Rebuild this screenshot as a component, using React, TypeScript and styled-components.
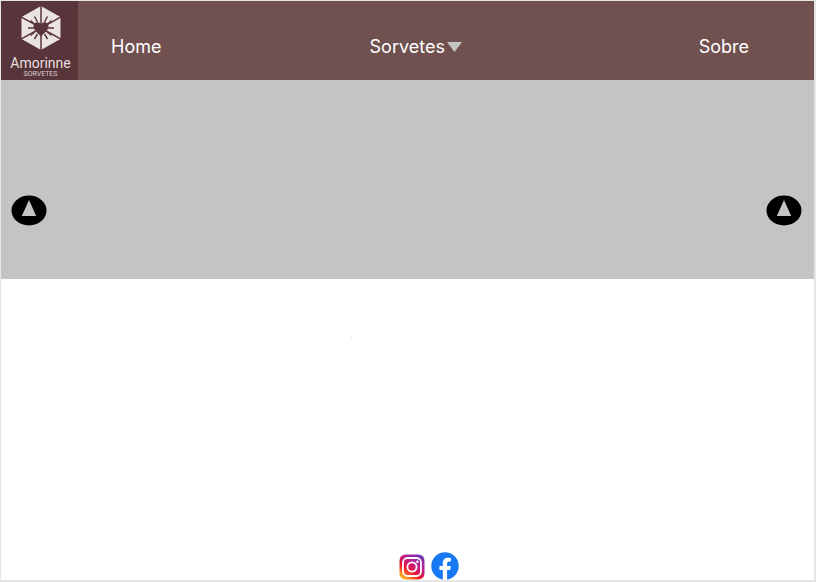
import React from "react";
import styled, { createGlobalStyle } from "styled-components";

const GlobalStyle = createGlobalStyle`
  *, *::before, *::after { box-sizing: border-box; }
  body {
    margin: 0;
    background: #e5e5e5;
    font-family: Inter, "Liberation Sans", sans-serif;
  }
`;

const Page = styled.div`
  display: flex;
  flex-direction: column;
  min-height: 100vh;
  border: solid #e5e5e5;
  border-width: 1px 2px 2px 1px;
  background: #ffffff;
`;

const Header = styled.header`
  display: flex;
  background: #70514f;
`;

const Brand = styled.a`
  display: flex;
  flex-direction: column;
  align-items: center;
  width: 77px;
  height: 79px;
  padding: 5px 0 0 2px;
  background: #58353a;
  color: #e9dfdf;
  text-decoration: none;
`;

const BrandName = styled.span`
  margin-top: 4px;
  font: 400 14px/16px Roboto, sans-serif;
`;

const BrandTag = styled.span`
  font: 400 7px/6px Roboto, sans-serif;
  color: #dccfd0;
`;

const Nav = styled.nav`
  flex: 1;
  display: grid;
  grid-template-columns: 11fr 14fr auto;
  align-items: center;
  padding: 12px 65px 0 33px;
`;

const NavLink = styled.a`
  justify-self: start;
  color: #ffffff;
  font-size: 18px;
  line-height: 24px;
  font-weight: 400;
  text-decoration: none;
`;

const NavButton = styled.button`
  justify-self: start;
  display: flex;
  align-items: center;
  gap: 2px;
  padding: 0;
  border: 0;
  background: none;
  color: #ffffff;
  font: 400 18px/24px Inter, "Liberation Sans", sans-serif;
`;

const Banner = styled.section`
  display: flex;
  align-items: center;
  justify-content: space-between;
  height: 199px;
  padding: 62px 12px 0 10px;
  background: #c4c4c4;
`;

const ArrowButton = styled.button`
  display: flex;
  padding: 0;
  border: 0;
  background: none;
`;

const Main = styled.main`
  flex: 1;
  padding: 58px 0 0 43%;
`;

const Speck = styled.div`
  width: 1px;
  height: 2px;
  background: #e5e5e5;
`;

const Footer = styled.footer`
  display: flex;
  justify-content: center;
  align-items: flex-end;
  gap: 6px;
  padding-left: 43px;
`;

const SocialLink = styled.a`
  display: flex;
`;

function LogoMark() {
  return (
    <svg width="40" height="45" viewBox="0 0 40 45" aria-hidden="true">
      <path d="M20 0 39.5 11V33L20 44 0.5 33V11Z" fill="#ebe3e3" />
      <g stroke="#58353a" strokeWidth="1.5" fill="none">
        <path d="M20 0V45M0 11 40 33M40 11 0 33" />
        <path d="M13.5 10.5 16.5 16M26.5 10.5 23.5 16M7 22H13M33 22H27M13.5 33 16.5 28M26.5 33 23.5 28" />
        <path d="M9.5 14.5 13.5 18M30.5 14.5 26.5 18M9.5 29.5 14 26M30.5 29.5 26 26" strokeWidth="1.2" />
      </g>
      <path
        d="M20 18.5C18.5 15 12.5 15.5 12.5 20C12.5 24.5 17 27 20 30.5C23 27 27.5 24.5 27.5 20C27.5 15.5 21.5 15 20 18.5Z"
        fill="#58353a"
      />
    </svg>
  );
}

function CarouselArrow() {
  return (
    <svg width="36" height="31" viewBox="0 0 36 31" aria-hidden="true">
      <ellipse cx="18" cy="15.5" rx="17.5" ry="15" fill="#000000" />
      <path d="M18 5 25.2 21H10.8Z" fill="#c4c4c4" />
    </svg>
  );
}

function InstagramIcon() {
  return (
    <svg width="26" height="26" viewBox="0 0 26 26" aria-hidden="true">
      <defs>
        <linearGradient id="instagram" x1="0.1" y1="1" x2="0.8" y2="0">
          <stop offset="0" stopColor="#ffc421" />
          <stop offset="0.15" stopColor="#ff8a1e" />
          <stop offset="0.38" stopColor="#f0142f" />
          <stop offset="0.65" stopColor="#c01c8c" />
          <stop offset="1" stopColor="#7136b8" />
        </linearGradient>
      </defs>
      <rect x="0.5" y="0.5" width="25" height="25" rx="6" fill="url(#instagram)" />
      <g fill="none" stroke="#ffffff" strokeWidth="1.8">
        <rect x="4" y="4" width="18" height="18" rx="4.5" />
        <circle cx="13" cy="13" r="4.6" />
      </g>
      <circle cx="18.4" cy="7.7" r="1.2" fill="#ffffff" />
    </svg>
  );
}

function FacebookIcon() {
  return (
    <svg width="28" height="28" viewBox="0 0 28 28" aria-hidden="true">
      <circle cx="14" cy="14" r="13.7" fill="#1877f2" />
      <path
        d="M11.8 28V18H8.4V14.1H11.8V11.1C11.8 7.7 13.8 5.8 16.9 5.8C18.4 5.8 19.9 6.1 19.9 6.1V9.4H18.2C16.6 9.4 16.1 10.4 16.1 11.5V14.1H19.8L19.2 18H16.1V28Z"
        fill="#ffffff"
      />
    </svg>
  );
}

export default function App() {
  return (
    <>
      <GlobalStyle />
      <Page>
        <Header>
          <Brand href="#">
            <LogoMark />
            <BrandName>Amorinne</BrandName>
            <BrandTag>SORVETES</BrandTag>
          </Brand>
          <Nav>
            <NavLink href="#">Home</NavLink>
            <NavButton type="button" aria-haspopup="true">
              Sorvetes
              <svg width="15" height="10" viewBox="0 0 15 10" aria-hidden="true">
                <path d="M0 0H15L7.5 10Z" fill="#c4c4c4" />
              </svg>
            </NavButton>
            <NavLink href="#">Sobre</NavLink>
          </Nav>
        </Header>
        <Banner>
          <ArrowButton type="button" aria-label="Anterior">
            <CarouselArrow />
          </ArrowButton>
          <ArrowButton type="button" aria-label="Próximo">
            <CarouselArrow />
          </ArrowButton>
        </Banner>
        <Main>
          <Speck />
        </Main>
        <Footer>
          <SocialLink href="#" aria-label="Instagram">
            <InstagramIcon />
          </SocialLink>
          <SocialLink href="#" aria-label="Facebook">
            <FacebookIcon />
          </SocialLink>
        </Footer>
      </Page>
    </>
  );
}
